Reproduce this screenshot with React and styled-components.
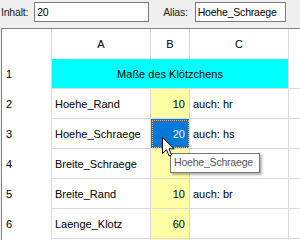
import styled, { createGlobalStyle } from 'styled-components';

const GlobalStyle = createGlobalStyle`
  body {
    margin: 0;
    background: #f0f0f0;
    font-family: 'Segoe UI', 'Liberation Sans', sans-serif;
    font-size: 11px;
    color: #000;
    overflow: hidden;
  }
`;

const Page = styled.div`
  position: relative;
  width: 300px;
  height: 240px;
  overflow: hidden;
`;

const Toolbar = styled.div`
  height: 28px;
  display: flex;
  align-items: flex-start;
  padding: 2px 0 0 1px;
  box-sizing: border-box;
  font-size: 10.5px;
  letter-spacing: -0.2px;
`;

const Label = styled.span`
  line-height: 20px;
  margin-right: ${(p) => p.$gap}px;
  margin-left: ${(p) => p.$left || 0}px;
  color: #1a1a1a;
`;

const Field = styled.div`
  width: ${(p) => p.$width}px;
  height: 20px;
  box-sizing: border-box;
  border: 1px solid #7a7a7a;
  background: #fff;
  padding-left: 2px;
  line-height: 18px;
  white-space: nowrap;
  overflow: hidden;
`;

const Sheet = styled.div`
  margin-left: 1px;
  border-top: 1px solid #838383;
  border-left: 1px solid #838383;
  background: #fff;
  display: grid;
  grid-template-columns: 50px 99px 39px 99px 1fr;
  grid-auto-rows: 30px;
`;

const Head = styled.div`
  border-right: ${(p) => (p.$last ? 'none' : '1px solid #dadada')};
  display: flex;
  align-items: center;
  justify-content: center;
`;

const RowHead = styled.div`
  border-right: 1px solid #dadada;
  display: flex;
  align-items: center;
  padding-left: 4px;
`;

const Cell = styled.div`
  box-sizing: border-box;
  border-right: ${(p) => (p.$last ? 'none' : '1px solid #dadada')};
  border-bottom: 1px solid #dadada;
  display: flex;
  align-items: center;
  justify-content: ${(p) => (p.$num ? 'flex-end' : 'flex-start')};
  padding: ${(p) => (p.$num ? '0 4px 0 0' : '0 0 0 3px')};
  background: ${(p) => (p.$num ? '#ffffa6' : '#fff')};
  white-space: nowrap;
`;

const Title = styled.div`
  grid-column: span 3;
  border-right: 1px solid #dadada;
  border-bottom: 1px solid #dadada;
  background: #00ffff;
  display: flex;
  align-items: center;
  justify-content: center;
`;

const Selected = styled(Cell)`
  background: #0078d7;
  color: #fff;
  outline: 1px dotted #f3a257;
  outline-offset: -2px;
`;

const Tooltip = styled.div`
  position: absolute;
  left: 170px;
  top: 153px;
  width: 90px;
  height: 20px;
  box-sizing: border-box;
  border: 1px solid #767676;
  background: #fff;
  color: #575757;
  padding-left: 3px;
  font-size: 10.5px;
  letter-spacing: -0.2px;
  line-height: 17px;
  white-space: nowrap;
  box-shadow: 2px 2px 2px rgba(0, 0, 0, 0.3);
`;

const Cursor = styled.svg`
  position: absolute;
  left: 162px;
  top: 137px;
`;

const rows = [
  { n: 2, name: 'Hoehe_Rand', value: '10', note: 'auch: hr' },
  { n: 3, name: 'Hoehe_Schraege', value: '20', note: 'auch: hs', selected: true },
  { n: 4, name: 'Breite_Schraege', value: '', note: '' },
  { n: 5, name: 'Breite_Rand', value: '10', note: 'auch: br' },
  { n: 6, name: 'Laenge_Klotz', value: '60', note: '' },
  { n: 7, name: '', value: '', note: '', hidden: true },
];

const App = () => (
  <>
    <GlobalStyle />
    <Page>
      <Toolbar>
        <Label $gap={6}>Inhalt:</Label>
        <Field $width={115}>20</Field>
        <Label $gap={7} $left={14}>Alias:</Label>
        <Field $width={91}>Hoehe_Schraege</Field>
      </Toolbar>

      <Sheet>
        <Head />
        <Head>A</Head>
        <Head>B</Head>
        <Head>C</Head>
        <Head $last />

        <RowHead>1</RowHead>
        <Title>Maße des Klötzchens</Title>
        <Cell $last />

        {rows.map((r) => {
          const Value = r.selected ? Selected : Cell;
          return [
            <RowHead key={`h${r.n}`}>{r.hidden ? '' : r.n}</RowHead>,
            <Cell key={`a${r.n}`}>{r.name}</Cell>,
            <Value key={`b${r.n}`} $num>{r.value}</Value>,
            <Cell key={`c${r.n}`}>{r.note}</Cell>,
            <Cell key={`d${r.n}`} $last />,
          ];
        })}
      </Sheet>

      <Tooltip>Hoehe_Schraege</Tooltip>
      <Cursor width="14" height="21" viewBox="0 0 14 21">
        <path
          d="M0.5 0.5 L0.5 16.5 L4.5 12.8 L7.2 19 L9.6 18 L7 11.8 L12.2 11.8 Z"
          fill="#fff"
          stroke="#000"
          strokeWidth="1"
          strokeLinejoin="miter"
        />
      </Cursor>
    </Page>
  </>
);

export default App;
